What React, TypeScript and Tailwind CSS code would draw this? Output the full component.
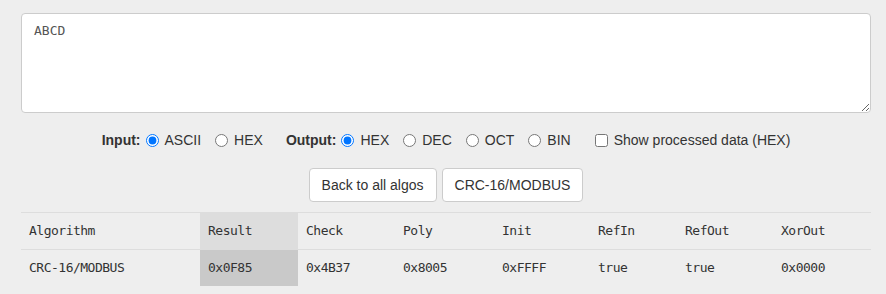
import React from 'react';

const cols = [
  { key: 'Algorithm', val: 'CRC-16/MODBUS', w: 'w-[179px]' },
  { key: 'Result', val: '0x0F85', w: 'w-[98px]', hl: true },
  { key: 'Check', val: '0x4B37', w: 'w-[97px]' },
  { key: 'Poly', val: '0x8005', w: 'w-[99px]' },
  { key: 'Init', val: '0xFFFF', w: 'w-[96px]' },
  { key: 'RefIn', val: 'true', w: 'w-[87px]' },
  { key: 'RefOut', val: 'true', w: 'w-[96px]' },
  { key: 'XorOut', val: '0x0000', w: 'w-[98px]' },
];

const Radio = ({ label, checked, name }: { label: string; checked?: boolean; name: string }) => (
  <label className="flex items-center mr-[9px]">
    <input
      type="radio"
      name={name}
      defaultChecked={checked}
      className="ml-[5px] mr-[6px] w-[13px] h-[13px] accent-[#0075ff]"
    />
    {label}
  </label>
);

export default function App() {
  return (
    <div className="min-h-[294px] bg-[#eeeeee] pt-[13px] pl-[21px] text-[#333] font-['Liberation_Sans',Arial,sans-serif]">
      <textarea
        defaultValue="ABCD"
        className="block w-[850px] h-[100px] bg-white border border-[#cccccc] rounded-[4px] px-[12px] py-[8px] text-[13px] leading-[18px] text-[#555] font-['DejaVu_Sans_Mono',monospace] outline-none"
      />

      <div className="w-[850px] flex justify-center items-center mt-[13px] h-[28px] text-[14px]">
        <span className="font-bold">Input:</span>
        <Radio name="in" label="ASCII" checked />
        <Radio name="in" label="HEX" />
        <span className="font-bold ml-[14px]">Output:</span>
        <Radio name="out" label="HEX" checked />
        <Radio name="out" label="DEC" />
        <Radio name="out" label="OCT" />
        <Radio name="out" label="BIN" />
        <label className="flex items-center ml-[15px]">
          <input type="checkbox" className="mr-[6px] w-[13px] h-[13px]" />
          Show processed data (HEX)
        </label>
      </div>

      <div className="w-[850px] flex justify-center gap-[5px] mt-[14px]">
        <button className="h-[34px] px-[12px] bg-white border border-[#cccccc] rounded-[4px] text-[14px] text-[#333]">
          Back to all algos
        </button>
        <button className="h-[34px] px-[12px] bg-white border border-[#cccccc] rounded-[4px] text-[14px] text-[#333]">
          CRC-16/MODBUS
        </button>
      </div>

      <table className="w-[850px] mt-[10px] border-collapse text-[13px] text-[#333] font-['DejaVu_Sans_Mono',monospace] tracking-[-0.5px]">
        <thead>
          <tr className="border-t border-[#dddddd] border-b">
            {cols.map((c) => (
              <th
                key={c.key}
                className={`${c.w} h-[37px] px-[8px] text-left font-normal ${c.hl ? 'bg-[#dddddd]' : ''}`}
              >
                {c.key}
              </th>
            ))}
          </tr>
        </thead>
        <tbody>
          <tr>
            {cols.map((c) => (
              <td key={c.key} className={`h-[36px] px-[8px] ${c.hl ? 'bg-[#c9c9c9]' : ''}`}>
                {c.val}
              </td>
            ))}
          </tr>
        </tbody>
      </table>
    </div>
  );
}
